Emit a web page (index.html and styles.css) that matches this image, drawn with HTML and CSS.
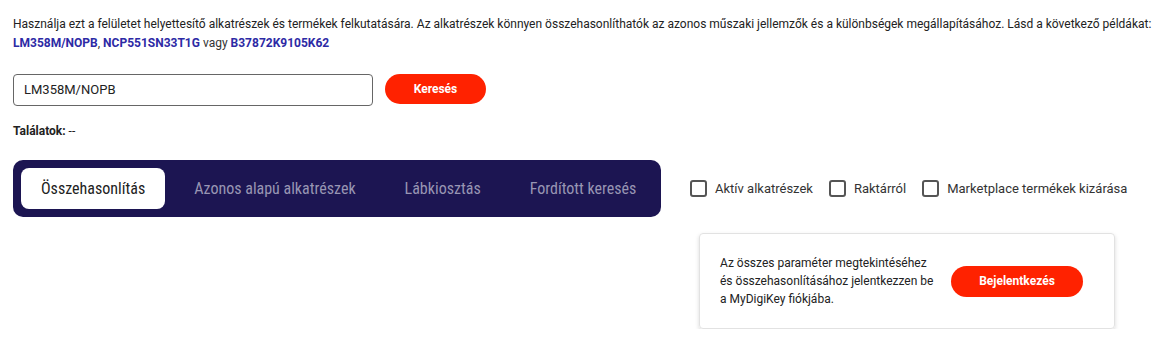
FILE: index.html
```html
<!DOCTYPE html>
<html lang="hu">
<head>
<meta charset="utf-8">
<link rel="stylesheet" href="styles.css">
</head>
<body>
<div class="page">
  <p class="intro">Használja ezt a felületet helyettesítő alkatrészek és termékek felkutatására. Az alkatrészek könnyen összehasonlíthatók az azonos műszaki jellemzők és a különbségek megállapításához. Lásd a következő példákat:</p>
  <p class="examples"><a class="ex">LM358M/NOPB</a>, <a class="ex">NCP551SN33T1G</a> vagy <a class="ex">B37872K9105K62</a></p>
  <div class="search">
    <div class="input">LM358M/NOPB</div>
    <button class="btn btn-search">Keresés</button>
  </div>
  <div class="results"><b>Találatok:</b> --</div>
  <div class="toolbar">
    <div class="tabs">
      <div class="tab active">Összehasonlítás</div>
      <div class="tab">Azonos alapú alkatrészek</div>
      <div class="tab">Lábkiosztás</div>
      <div class="tab">Fordított keresés</div>
    </div>
    <div class="filters">
      <label class="check"><span class="box"></span>Aktív alkatrészek</label>
      <label class="check"><span class="box"></span>Raktárról</label>
      <label class="check"><span class="box"></span>Marketplace termékek kizárása</label>
    </div>
  </div>
  <div class="card-row">
    <div class="card">
      <p class="card-text">Az összes paraméter megtekintéséhez és összehasonlításához jelentkezzen be a MyDigiKey fiókjába.</p>
      <button class="btn btn-login">Bejelentkezés</button>
    </div>
  </div>
</div>
</body>
</html>
```
FILE: styles.css
```css
* { box-sizing: border-box; }
html, body { margin: 0; padding: 0; background: #fff; }
body { font-family: Roboto, "Noto Sans", sans-serif; color: #222; }
.page { padding: 16px 0 0 13px; }
.intro { margin: 0; font-size: 12px; line-height: 16px; color: #222; white-space: nowrap; }
.examples { margin: 0; font-size: 12px; line-height: 16px; margin-top: 3px; color: #333; }
.ex { color: #2d2aa5; font-weight: 700; }
.search { display: flex; align-items: flex-start; gap: 12px; margin-top: 23px; }
.input { width: 360px; height: 32px; border: 1px solid #666; border-radius: 4px; padding: 0 10px; font-size: 13px; line-height: 30px; color: #222; }
.btn { border: 0; background: #ff2200; color: #fff; font-family: Roboto, sans-serif; font-weight: 700; font-size: 12px; border-radius: 16px; cursor: pointer; }
.btn-search { width: 101px; height: 30px; }
.results { margin-top: 17px; font-size: 12px; line-height: 16px; color: #222; }
.toolbar { display: flex; align-items: center; margin-top: 21px; gap: 29px; }
.tabs { display: flex; align-items: center; gap: 9px; width: 648px; height: 57px; background: #1c1552; border-radius: 10px; padding: 0 8px; }
.tab { font-family: "Roboto Condensed", Roboto, sans-serif; font-stretch: 80%; font-size: 16px; color: #9895b3; padding: 0 20px; line-height: 41px; white-space: nowrap; }
.tab.active { background: #fff; color: #222; border-radius: 8px; }
.filters { display: flex; align-items: center; gap: 16px; }
.check { display: flex; align-items: center; gap: 8px; font-size: 13px; color: #333; }
.box { width: 17px; height: 17px; border: 2px solid #555; border-radius: 3px; }
.card-row { display: flex; justify-content: flex-end; padding-right: 39px; margin-top: 16px; }
.card { width: 416px; height: 96px; border: 1px solid #e2e2e2; border-radius: 4px; box-shadow: 0 2px 4px rgba(0,0,0,0.15); display: flex; align-items: center; padding: 0 20px; gap: 16px; }
.card-text { margin: 0; width: 215px; font-size: 12px; line-height: 18px; color: #222; }
.btn-login { width: 132px; height: 31px; font-size: 12px; }
```
